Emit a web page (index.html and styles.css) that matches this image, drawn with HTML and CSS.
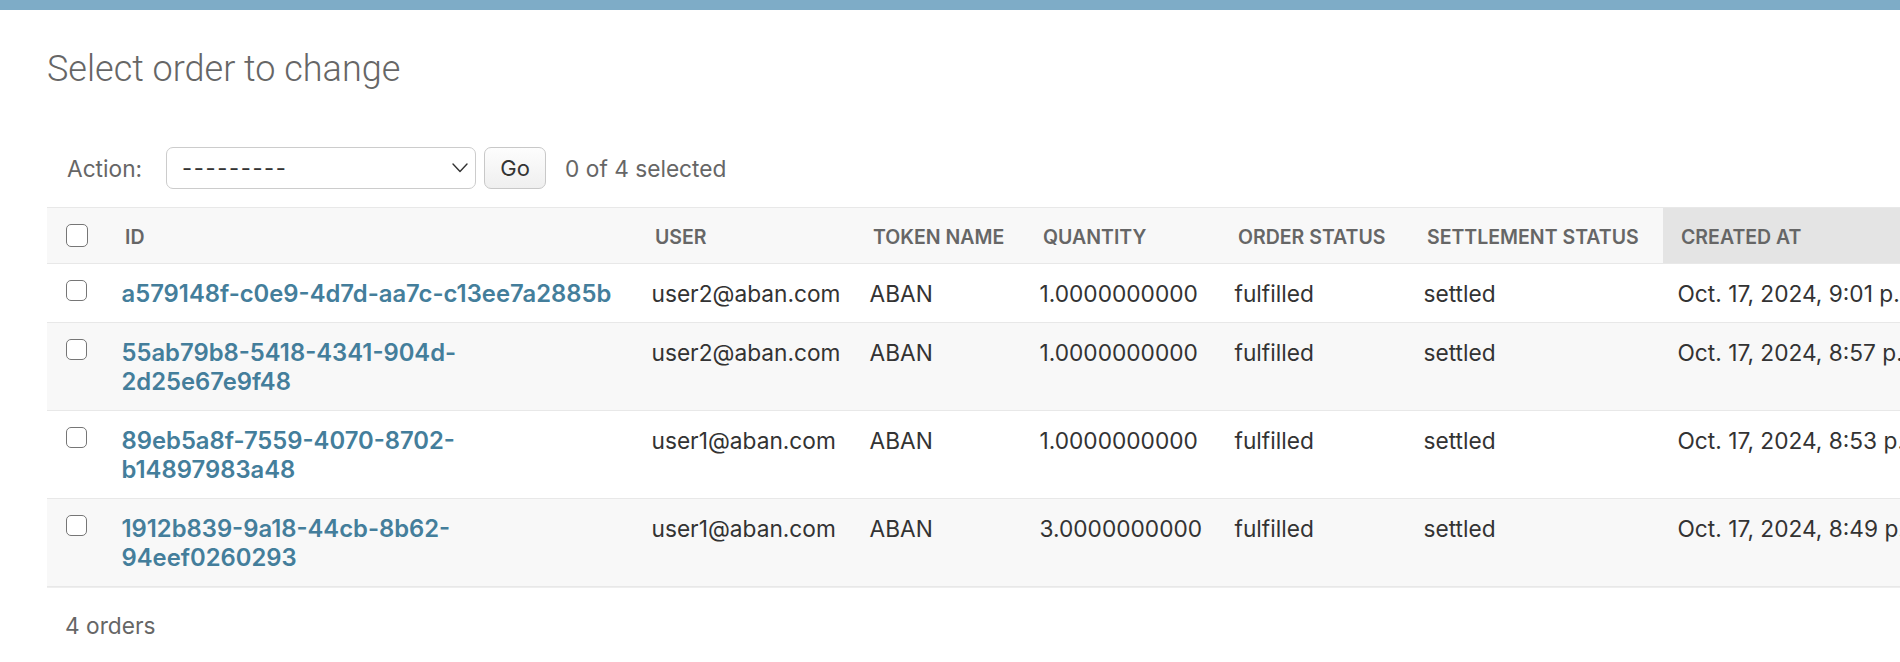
FILE: index.html
```html
<!DOCTYPE html>
<html lang="en">
<head>
<meta charset="utf-8">
<title>Select order to change</title>
<link rel="stylesheet" href="styles.css">
</head>
<body>
<div class="breadcrumbs"></div>
<main class="content">
  <h1 class="title">Select order to change</h1>
  <form class="changelist">
    <div class="actions">
      <label class="action-label" for="action">Action:</label>
      <div class="select-wrap">
        <select id="action" class="action-select">
          <option>---------</option>
        </select>
        <svg class="chevron" width="16" height="10" viewBox="0 0 16 10" aria-hidden="true"><path d="M1 1 L8 8.5 L15 1" fill="none" stroke="#333" stroke-width="1.4" stroke-linecap="round" stroke-linejoin="round"/></svg>
      </div>
      <button type="button" class="go-button">Go</button>
      <span class="action-counter">0 of 4 selected</span>
    </div>
    <table class="results">
      <colgroup>
        <col class="c-check">
        <col class="c-id">
        <col class="c-user">
        <col class="c-token">
        <col class="c-qty">
        <col class="c-order">
        <col class="c-settle">
        <col class="c-created">
      </colgroup>
      <thead>
        <tr>
          <th class="th-check"><input type="checkbox" class="cb cb-head"></th>
          <th>ID</th>
          <th>User</th>
          <th>Token name</th>
          <th>Quantity</th>
          <th>Order status</th>
          <th>Settlement status</th>
          <th class="sorted">Created at</th>
        </tr>
      </thead>
      <tbody>
        <tr>
          <td class="td-check"><input type="checkbox" class="cb"></td>
          <th class="id-cell"><a href="#">a579148f-c0e9-4d7d-aa7c-c13ee7a2885b</a></th>
          <td>user2@aban.com</td>
          <td>ABAN</td>
          <td>1.0000000000</td>
          <td>fulfilled</td>
          <td>settled</td>
          <td>Oct. 17, 2024, 9:01 p.m.</td>
        </tr>
        <tr>
          <td class="td-check"><input type="checkbox" class="cb"></td>
          <th class="id-cell"><a href="#">55ab79b8-5418-4341-904d-<br>2d25e67e9f48</a></th>
          <td>user2@aban.com</td>
          <td>ABAN</td>
          <td>1.0000000000</td>
          <td>fulfilled</td>
          <td>settled</td>
          <td>Oct. 17, 2024, 8:57 p.m.</td>
        </tr>
        <tr>
          <td class="td-check"><input type="checkbox" class="cb"></td>
          <th class="id-cell"><a href="#">89eb5a8f-7559-4070-8702-<br>b14897983a48</a></th>
          <td>user1@aban.com</td>
          <td>ABAN</td>
          <td>1.0000000000</td>
          <td>fulfilled</td>
          <td>settled</td>
          <td>Oct. 17, 2024, 8:53 p.m.</td>
        </tr>
        <tr>
          <td class="td-check"><input type="checkbox" class="cb"></td>
          <th class="id-cell"><a href="#">1912b839-9a18-44cb-8b62-<br>94eef0260293</a></th>
          <td>user1@aban.com</td>
          <td>ABAN</td>
          <td>3.0000000000</td>
          <td>fulfilled</td>
          <td>settled</td>
          <td>Oct. 17, 2024, 8:49 p.m.</td>
        </tr>
      </tbody>
    </table>
    <p class="paginator">4 orders</p>
  </form>
</main>
</body>
</html>
```
FILE: styles.css
```css
html, body {
  margin: 0;
  padding: 0;
  overflow: hidden;
  background: #fff;
}

body {
  font-family: Inter, "Noto Sans", "Liberation Sans", sans-serif;
  font-size: 22.7px;
  color: #333;
}

.breadcrumbs {
  height: 10px;
  background: #7eacc7;
}

.content {
  padding: 38px 0 0 47px;
}

.title {
  margin: 0 0 38px;
  font-family: Roboto, Inter, sans-serif;
  font-size: 36px;
  line-height: 43px;
  font-weight: 300;
  color: #666;
}

.actions {
  display: flex;
  align-items: center;
  height: 42px;
  padding: 18px 0 18px 20px;
  color: #666;
}

.action-label {
  margin-right: 24px;
}

.select-wrap {
  position: relative;
  width: 310px;
  height: 42px;
}

.action-select {
  appearance: none;
  -webkit-appearance: none;
  width: 310px;
  height: 42px;
  box-sizing: border-box;
  border: 1px solid #ccc;
  border-radius: 7px;
  background: #fff;
  padding: 0 0 0 15px;
  font-family: inherit;
  font-size: 22px;
  letter-spacing: 1.6px;
  color: #333;
}

.chevron {
  position: absolute;
  right: 8px;
  top: 16px;
  pointer-events: none;
}

.go-button {
  margin-left: 8px;
  width: 62px;
  height: 42px;
  box-sizing: border-box;
  border: 1px solid #c8c8c8;
  border-radius: 7px;
  background: linear-gradient(#fdfdfd, #efefef);
  font-family: inherit;
  font-size: 22px;
  color: #333;
  padding: 0;
}

.action-counter {
  margin-left: 19px;
  color: #666;
}

.results {
  border-collapse: collapse;
  table-layout: fixed;
  width: 2100px;
}

.c-check { width: 60px; }
.c-id { width: 530px; }
.c-user { width: 218px; }
.c-token { width: 170px; }
.c-qty { width: 195px; }
.c-order { width: 189px; }
.c-settle { width: 254px; }
.c-created { width: 484px; }

.results thead th {
  height: 52px;
  padding: 3px 0 0 18px;
  background: #f8f8f8;
  border-top: 1px solid #e8e8e8;
  border-bottom: 1px solid #e8e8e8;
  text-align: left;
  vertical-align: middle;
  text-transform: uppercase;
  font-size: 19.5px;
  font-weight: 600;
  color: #666;
  white-space: nowrap;
}

.results thead th.sorted {
  background: #e4e4e4;
}

.results thead th.th-check {
  padding: 0 0 0 19px;
  height: 55px;
}

.results tbody td,
.results tbody th {
  padding: 15px 14px 14px 14.5px;
  line-height: 29px;
  vertical-align: top;
  text-align: left;
  font-weight: 400;
  border-bottom: 1px solid #e8e8e8;
  white-space: nowrap;
}

.results tbody tr:nth-child(even) {
  background: #f8f8f8;
}

.results tbody .td-check {
  padding: 16px 0 0 19px;
  line-height: 0;
}

.results tbody .id-cell a {
  color: #447e9b;
  font-size: 23.8px;
  font-weight: 600;
  text-decoration: none;
}

.cb {
  appearance: none;
  -webkit-appearance: none;
  display: block;
  margin: 0;
  width: 21px;
  height: 21px;
  box-sizing: border-box;
  border: 1.5px solid #767676;
  border-radius: 5px;
  background: #fff;
}

.cb-head {
  width: 22px;
  height: 23px;
}

.paginator {
  margin: 0;
  border-top: 1px solid #eee;
  padding: 18px 18px;
  line-height: 40px;
  color: #666;
}
```
